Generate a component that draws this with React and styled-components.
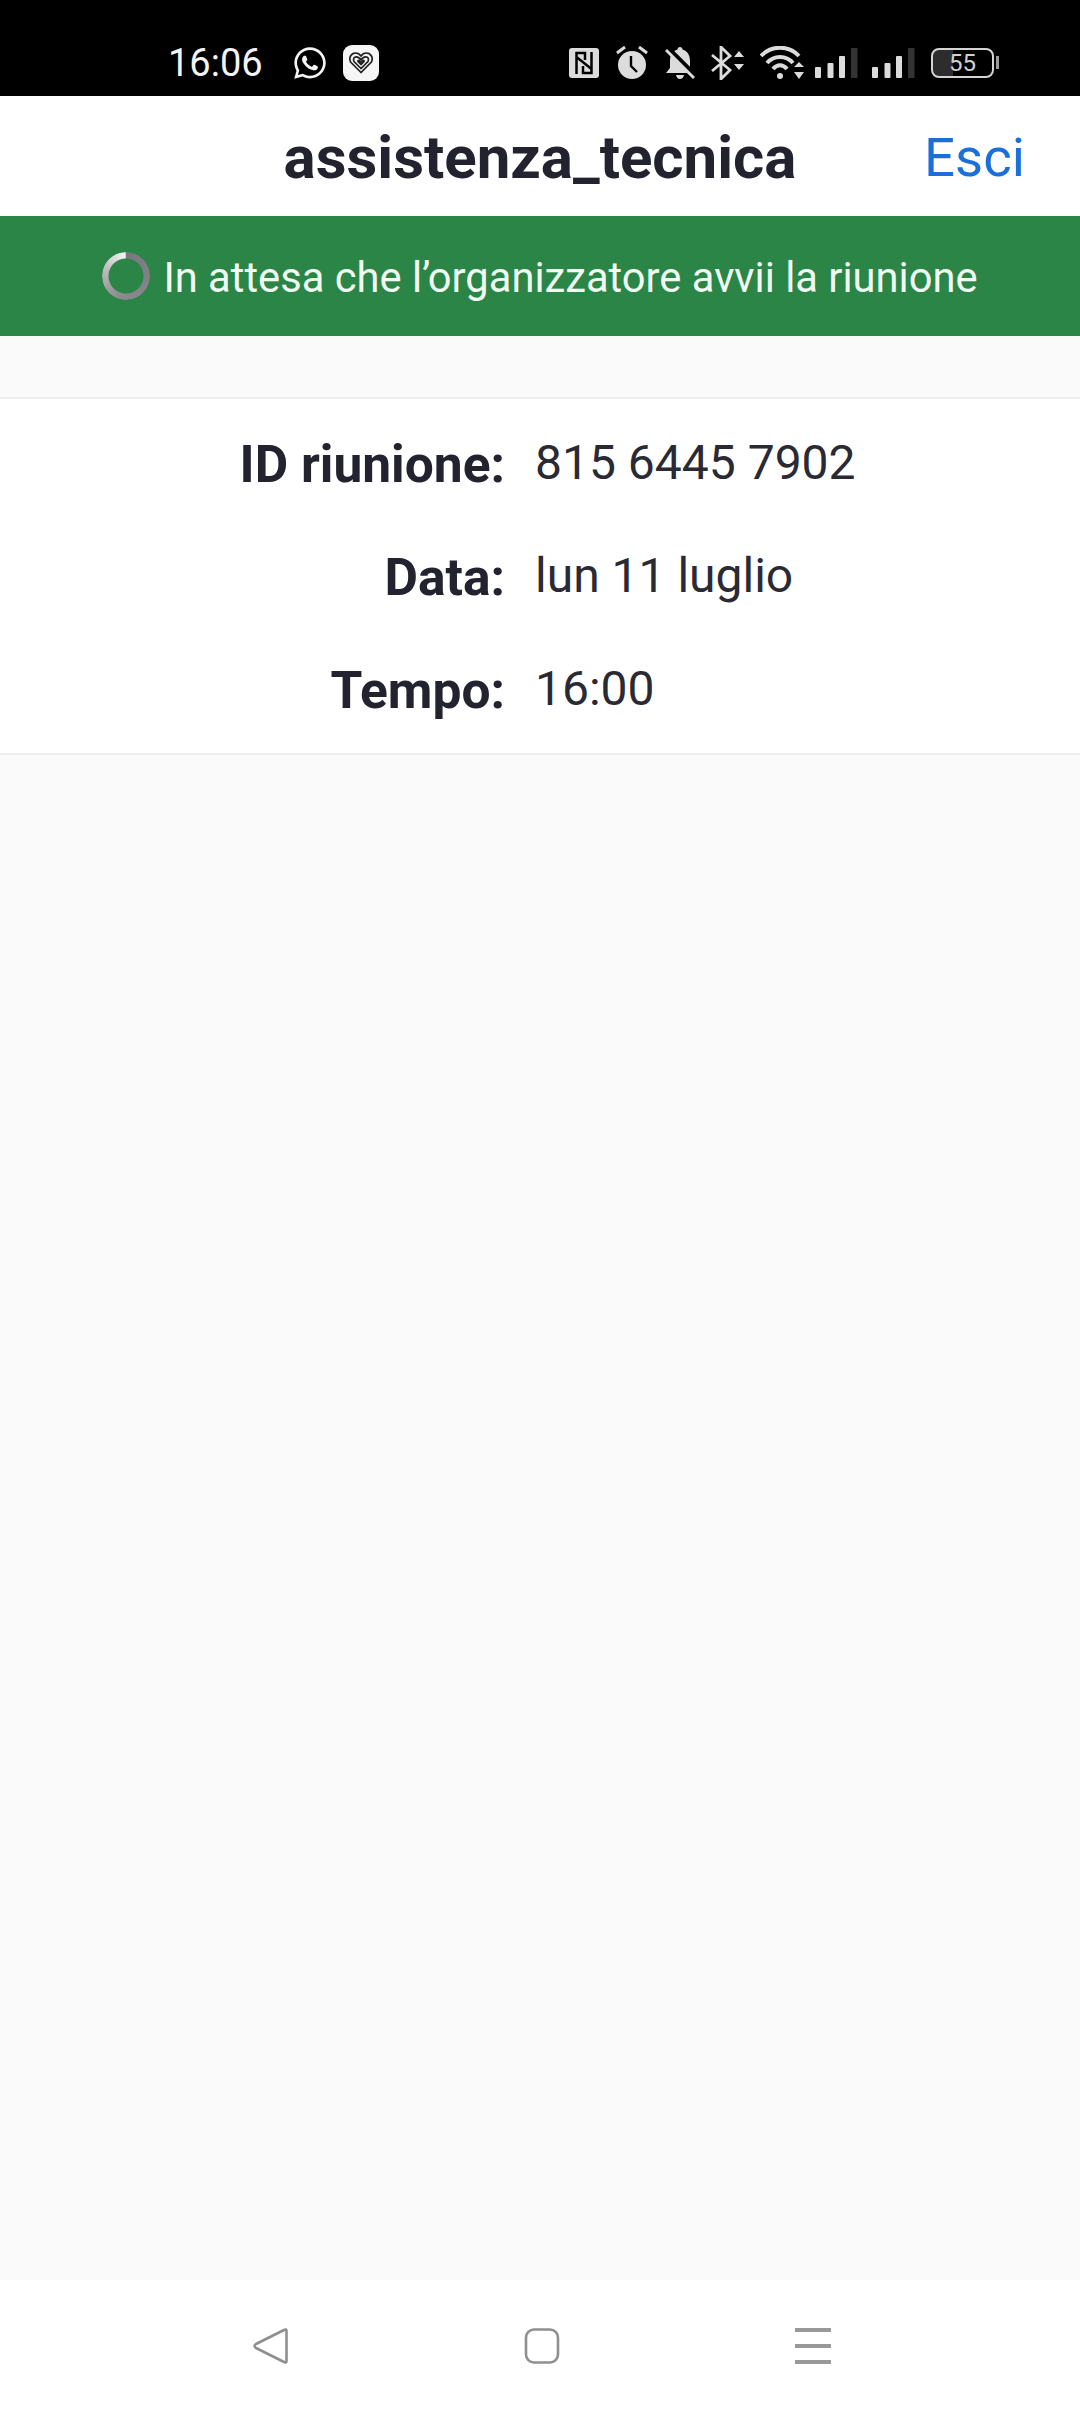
import React from "react";
import styled, { createGlobalStyle } from "styled-components";
import { FaWhatsapp } from "react-icons/fa";

const Global = createGlobalStyle`
  html, body { margin: 0; padding: 0; background: #fafafa; }
  * { box-sizing: border-box; }
`;

const Page = styled.div`
  width: 1080px;
  height: 2412px;
  display: flex;
  flex-direction: column;
  background: #fafafa;
  font-family: Roboto, "Liberation Sans", sans-serif;
  color: #23232f;
  overflow: hidden;
`;

const StatusBar = styled.div`
  height: 96px;
  flex: none;
  background: #000;
  display: flex;
  align-items: flex-start;
  justify-content: space-between;
  padding: 45px 81px 0 168px;
`;
const StatusGroup = styled.div`
  display: flex;
  align-items: flex-start;
`;
const Time = styled.div`
  font-size: 38px;
  line-height: 36px;
  color: #f4f4f4;
  width: 124px;
`;
const WhatsApp = styled(FaWhatsapp)`
  width: 36px;
  height: 36px;
  color: #f4f4f4;
  margin: 0 15px 0 0;
`;
const HeartTile = styled.div`
  width: 36px;
  height: 36px;
  border-radius: 9px;
  background: #f6f6f6;
  display: flex;
  align-items: center;
  justify-content: center;
`;
const Glyph = styled.svg`
  display: block;
  flex: none;
  margin-left: ${(p) => p.$gap || 0}px;
  margin-top: ${(p) => p.$top || 0}px;
`;
const Battery = styled.div`
  position: relative;
  width: 63px;
  height: 30px;
  margin: 3px 5px 0 15px;
  border: 2.5px solid #d4d4d4;
  border-radius: 8px;
  display: flex;
  align-items: center;
  justify-content: center;
  font-size: 24px;
  line-height: 1;
  color: #d0d0d0;
  background: linear-gradient(90deg, #2d2d2d 0 34%, #000 34%);
  &::after {
    content: "";
    position: absolute;
    right: -7px;
    top: 6px;
    width: 3px;
    height: 13px;
    background: #9a9a9a;
  }
`;

const Header = styled.header`
  height: 120px;
  flex: none;
  background: #fff;
  position: relative;
  display: flex;
  align-items: center;
  justify-content: center;
  padding-top: 3px;
`;
const Title = styled.h1`
  margin: 0;
  font-size: 60px;
  line-height: 1;
  font-weight: 700;
  color: #23232f;
`;
const Exit = styled.a`
  position: absolute;
  right: 55px;
  top: 34px;
  font-size: 54.5px;
  line-height: 1;
  color: #1a6fd8;
`;

const Banner = styled.div`
  height: 120px;
  flex: none;
  background: #2a8547;
  display: flex;
  align-items: center;
  justify-content: center;
  gap: 13px;
  font-size: 41.7px;
  color: #f0fbf2;
`;
const BannerText = styled.span`
  position: relative;
  top: 1px;
`;
const Spinner = styled.div`
  width: 48px;
  height: 48px;
  border-radius: 50%;
  filter: blur(0.6px);
  background: conic-gradient(#77777f 0deg, #8b8b90 200deg, #bdbdbd 290deg, #f4f4f4 358deg, #77777f 360deg);
  -webkit-mask: radial-gradient(circle, transparent 17px, #000 18px);
  mask: radial-gradient(circle, transparent 17px, #000 18px);
`;

const Details = styled.section`
  margin-top: 61px;
  flex: none;
  background: #fff;
  border-top: 2px solid #eeeeee;
  border-bottom: 2px solid #eeeeee;
  height: 358px;
  padding-top: 6px;
`;
const Row = styled.div`
  height: 113px;
  display: grid;
  grid-template-columns: 505px 1fr;
  column-gap: 30px;
  align-items: center;
`;
const Label = styled.div`
  text-align: right;
  font-size: 51.5px;
  font-weight: 700;
  line-height: 1;
  position: relative;
  top: 3px;
`;
const Value = styled.div`
  font-size: 48px;
  line-height: 1;
  position: relative;
  top: 1px;
  color: #2a2a35;
`;

const Spacer = styled.div`
  flex: 1;
`;
const NavBar = styled.nav`
  height: 132px;
  flex: none;
  background: #fff;
  display: flex;
  align-items: flex-start;
  justify-content: center;
  gap: 235px;
  padding: 48px 0 0 3px;
`;

const g = "#dcdcdc";

function Signal({ gap }) {
  return (
    <Glyph $top={3} $gap={gap} width="44" height="30" viewBox="0 0 44 30">
      <rect x="0" y="19" width="6" height="11" rx="1" fill={g} />
      <rect x="12.5" y="15" width="6" height="15" rx="1" fill={g} />
      <rect x="24" y="8" width="6" height="22" rx="1" fill={g} />
      <rect x="36" y="0" width="6.5" height="30" fill="#333" />
    </Glyph>
  );
}

export default function App() {
  return (
    <Page>
      <Global />
      <StatusBar>
        <StatusGroup>
          <Time>16:06</Time>
          <WhatsApp />
          <HeartTile>
            <svg width="24" height="22" viewBox="0 0 24 22" fill="none" stroke="#222" strokeWidth="1.7">
              <path d="M12 20.5 1.6 10C-.5 6 2 1 6.5 1 9 1 11 2.4 12 4 13 2.4 15 1 17.500 1 22 1 24.500 6 22.400 10Z" />
              <path d="M12 16.500 5 9.500C3.800 7 5 4.800 7.300 4.800 9.300 4.800 11 6.300 12 8 13 6.300 14.700 4.800 16.700 4.800 19 4.800 20.200 7 19 9.500Z" />
              <path d="M12 12.500 9 9.500C8.600 8.600 9.700 8 10.500 9L12 11 13.500 9C14.300 8 15.400 8.600 15 9.500Z" />
            </svg>
          </HeartTile>
        </StatusGroup>
        <StatusGroup>
          <Glyph $top={3} width="30" height="30" viewBox="0 0 30 30">
            <rect width="30" height="30" rx="3" fill={g} />
            <path d="M7.500 26V5H16V12M7.500 9 22.500 21M22.500 4V25H14V18" fill="none" stroke="#000" strokeWidth="2.500" />
          </Glyph>
          <Glyph $top={1} $gap={17} width="32" height="34" viewBox="0 0 32 34">
            <circle cx="16" cy="19" r="14" fill={g} />
            <path d="M15 10v10l6 6" fill="none" stroke="#000" strokeWidth="2.400" />
            <path d="M1 7 9 1M31 7 23 1" stroke={g} strokeWidth="3" />
          </Glyph>
          <Glyph $top={1} $gap={17} width="30" height="34" viewBox="0 0 30 34">
            <path d="M15 1c1.500 0 2.500 1 2.500 2.500C23 5 25 10 25 15v7l4 5H1l4-5v-7c0-5 2-10 7.500-11.500C12.500 2 13.500 1 15 1Z" fill={g} />
            <path d="M11 29h8c-.5 2.500-2 4-4 4s-3.500-1.500-4-4Z" fill={g} />
            <path d="M3 3 30 30" stroke="#000" strokeWidth="6" />
            <path d="M1 4 29 32" stroke={g} strokeWidth="3" />
          </Glyph>
          <Glyph $top={1} $gap={16} width="34" height="34" viewBox="0 0 34 34">
            <path d="M1 9 19 24 10 33V1L19 10 1 25" fill="none" stroke={g} strokeWidth="2.800" />
            <path d="M23 11 28 5 33 11ZM23 18 28 24 33 18Z" fill={g} />
          </Glyph>
          <Glyph $top={1} $gap={15} width="44" height="34" viewBox="0 0 44 34">
            <path d="M1 10C11 -1 29 -1 39 10" fill="none" stroke={g} strokeWidth="4" />
            <path d="M7 17C14 9 26 9 33 17" fill="none" stroke={g} strokeWidth="4" />
            <path d="M13 23C17 18 23 18 27 23" fill="none" stroke={g} strokeWidth="4" />
            <circle cx="20" cy="30" r="3" fill={g} />
            <path d="M34 21 39 16 44 21ZM34 26 39 33 44 26Z" fill={g} />
          </Glyph>
          <Signal gap={11} />
          <Signal gap={13} />
          <Battery>55</Battery>
        </StatusGroup>
      </StatusBar>

      <Header>
        <Title>assistenza_tecnica</Title>
        <Exit>Esci</Exit>
      </Header>

      <Banner>
        <Spinner />
        <BannerText>In attesa che l’organizzatore avvii la riunione</BannerText>
      </Banner>

      <Details>
        <Row><Label>ID riunione:</Label><Value>815 6445 7902</Value></Row>
        <Row><Label>Data:</Label><Value>lun 11 luglio</Value></Row>
        <Row><Label>Tempo:</Label><Value>16:00</Value></Row>
      </Details>

      <Spacer />

      <NavBar>
        <svg width="36" height="36" viewBox="0 0 36 36" fill="none" stroke="#8f8f8f" strokeWidth="2.600" strokeLinejoin="round">
          <path d="M33.500 3c0-1.500-1-2-2.500-1L3 16c-2 1.200-2 2.800 0 4l28 14c1.500 1 2.500.5 2.500-1Z" />
        </svg>
        <svg width="36" height="36" viewBox="0 0 36 36" fill="none" stroke="#8f8f8f" strokeWidth="2.600">
          <rect x="2" y="1.500" width="32" height="33" rx="8" />
        </svg>
        <svg width="36" height="36" viewBox="0 0 36 36" fill="#999">
          <rect x="0" y="0" width="36" height="4" />
          <rect x="0" y="16" width="36" height="4" />
          <rect x="0" y="32" width="36" height="4" />
        </svg>
      </NavBar>
    </Page>
  );
}
